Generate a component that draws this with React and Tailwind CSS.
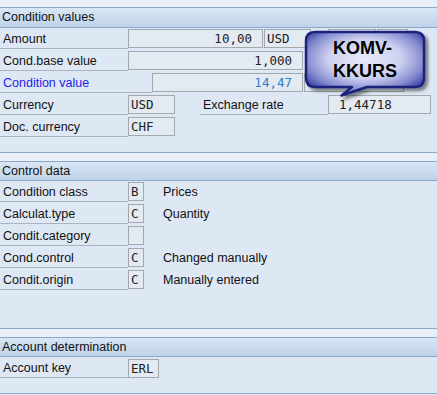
import React from "react";

const SANS = "font-['Liberation_Sans',Arial,sans-serif]";
const MONO = "font-['DejaVu_Sans_Mono','Liberation_Mono',monospace]";

function Label({ children, w = "w-[128px]", color = "text-[#111]", pl = "pl-[3px]" }) {
  return (
    <div
      className={`${w} h-[21px] shrink-0 border-b border-[#aab4c1] ${pl} leading-[23px] whitespace-nowrap ${color}`}
    >
      {children}
    </div>
  );
}

function Field({ w, children, align = "left", color = "text-[#222]", extra = "", ml = "" }) {
  return (
    <div
      className={`${w} ${ml} mt-[1px] h-[19px] shrink-0 border border-[#a3a8ae] bg-[#e4eaf2] ${MONO} text-[12.5px] leading-[17px] ${
        align === "right" ? "text-right pr-[10px]" : "pl-[2px]"
      } ${color} ${extra} whitespace-nowrap`}
    >
      {children}
    </div>
  );
}

function Row({ children }) {
  return <div className="flex h-[22px] items-start">{children}</div>;
}

function Header({ children, h = "h-[19px]" }) {
  return (
    <div
      className={`${h} border-b border-[#8ca8cb] bg-gradient-to-b from-[#d9e6f4] to-[#bfd3ea] pl-[2px] leading-[18px] text-[#111]`}
    >
      {children}
    </div>
  );
}

function Band() {
  return <div className="h-[10px] border-y border-[#8ca8cb] bg-[#eaf0f8]" />;
}

function CtrlRow({ label, code, desc }) {
  return (
    <Row>
      <Label>{label}</Label>
      <Field w="w-[16px]" extra="!pl-[2px]">{code}</Field>
      <div className="ml-[19px] leading-[23px] text-[#111] whitespace-nowrap">{desc}</div>
    </Row>
  );
}

export default function App() {
  return (
    <div className={`relative w-[437px] h-[395px] overflow-hidden bg-[#dee8f4] ${SANS} text-[12.5px]`}>
      {/* Section 1 */}
      <div className="h-[8px] border-b border-[#8ca8cb] bg-[#eaf0f8]" />
      <Header h="h-[20px]">Condition values</Header>
      <Row>
        <Label>Amount</Label>
        <Field w="w-[135px]" align="right">10,00</Field>
        <Field w="w-[47px]" ml="ml-[1px]">USD</Field>
        <Field w="w-[48px]" ml="ml-[17px]"></Field>
        <Field w="w-[31px]" ml="ml-[1px]"></Field>
      </Row>
      <Row>
        <Label>Cond.base value</Label>
        <Field w="w-[175px]" align="right">1,000</Field>
      </Row>
      <Row>
        <Label w="w-[152px]" color="text-[#1e1ee6]">Condition value</Label>
        <Field w="w-[151px]" align="right" color="text-[#2f7fcc]">14,47</Field>
        <Field w="w-[100px]" ml="ml-[1px]"></Field>
      </Row>
      <Row>
        <Label>Currency</Label>
        <Field w="w-[47px]">USD</Field>
        <div className="w-[25px] shrink-0" />
        <Label w="w-[128px]">Exchange rate</Label>
        <Field w="w-[103px]" extra="!pl-[10px]">1,44718</Field>
      </Row>
      <Row>
        <Label>Doc. currency</Label>
        <Field w="w-[47px]">CHF</Field>
      </Row>

      {/* Section 2 */}
      <div className="h-[14px]" />
      <Band />
      <Header>Control data</Header>
      <CtrlRow label="Condition class" code="B" desc="Prices" />
      <CtrlRow label="Calculat.type" code="C" desc="Quantity" />
      <CtrlRow label="Condit.category" code="" desc="" />
      <CtrlRow label="Cond.control" code="C" desc="Changed manually" />
      <CtrlRow label="Condit.origin" code="C" desc="Manually entered" />

      {/* Section 3 */}
      <div className="h-[37px]" />
      <Band />
      <Header>Account determination</Header>
      <Row>
        <Label>Account key</Label>
        <Field w="w-[31px]" extra="mt-[2px]">ERL</Field>
      </Row>
      <div className="h-[15px] border-b border-[#8ca8cb]" />

      {/* Callout bubble */}
      <svg
        className="absolute left-[300px] top-[28px]"
        width="137"
        height="78"
        viewBox="0 0 137 78"
      >
        <defs>
          <radialGradient id="bfill" cx="0.5" cy="0.42" r="0.62">
            <stop offset="0" stopColor="#e9ebf9" />
            <stop offset="0.5" stopColor="#cdd0ef" />
            <stop offset="0.8" stopColor="#858bd0" />
            <stop offset="1" stopColor="#3f47aa" />
          </radialGradient>
          <filter id="bshadow" x="-10%" y="-10%" width="130%" height="140%">
            <feDropShadow dx="3" dy="3" stdDeviation="1.8" floodColor="#000" floodOpacity="0.45" />
          </filter>
        </defs>
        <path
          d="M 15 4 H 115 Q 124 4 124 13 V 50 Q 124 59 115 59 H 67 L 41.5 67.5 L 52 59 H 15 Q 6 59 6 50 V 13 Q 6 4 15 4 Z"
          fill="url(#bfill)"
          stroke="#1a217a"
          strokeWidth="2.5"
          strokeLinejoin="round"
          filter="url(#bshadow)"
        />
      </svg>
      <div className="absolute left-[333px] top-[37px] text-[18px] font-bold leading-[23px] text-black">
        <div>KOMV-</div>
        <div>KKURS</div>
      </div>
    </div>
  );
}
